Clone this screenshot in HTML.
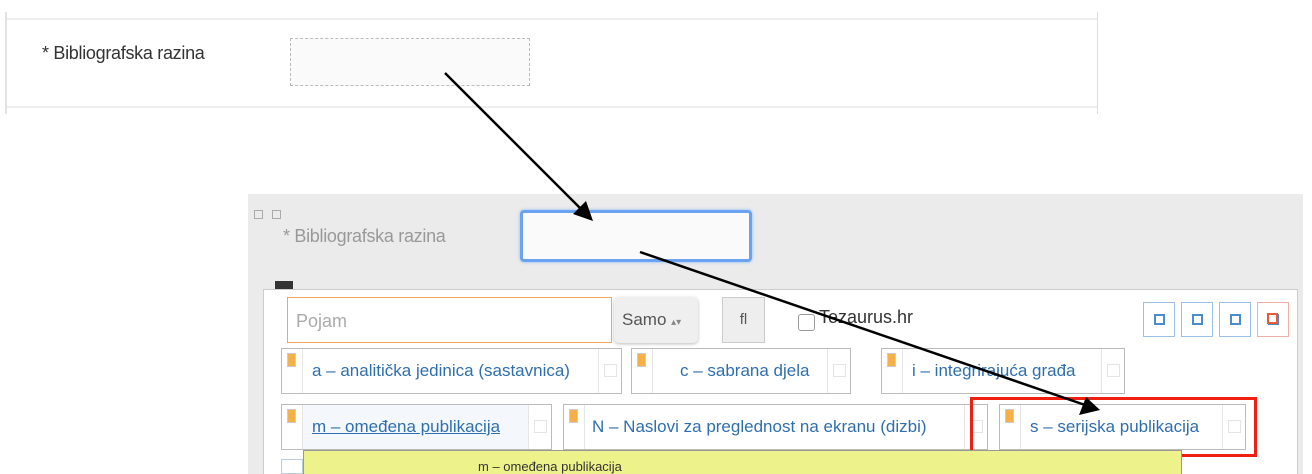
<!DOCTYPE html>
<html style="overflow:hidden;width:1312px;height:474px"><head><meta charset="utf-8"><style>
body{margin:0;width:1312px;height:474px;overflow:hidden;background:#fff;font-family:"Liberation Sans",sans-serif;position:relative}
.a{position:absolute;box-sizing:border-box}
.item{position:absolute;box-sizing:border-box;border:1px solid #bbb;background:#fff;height:46px}
.item .l{position:absolute;left:0;top:0;bottom:0;width:20px;border-right:1px solid #e6e6e6}
.item .l:before{content:"";position:absolute;left:5px;top:4px;width:9px;height:14px;background:#f5b04a;border:1px solid #ccc;box-sizing:border-box}
.item .r{position:absolute;right:0;top:0;bottom:0;width:22px;border-left:1px solid #e6e6e6}
.item .r:before{content:"";position:absolute;left:5px;top:15px;width:11px;height:11px;border:1px solid #e4e4e4}
.item .t{position:absolute;top:12px;color:#2f6fae;font-size:17px;white-space:nowrap}
.btn{position:absolute;top:302px;width:32px;height:35px;border:1px solid #9cc1e6;box-sizing:border-box}
.btn:after{content:"";position:absolute;left:10px;top:11px;width:11px;height:11px;border:2px solid #4a8ccc;box-sizing:border-box}
</style></head><body>
<div class="a" style="left:5px;top:12px;width:2px;height:102px;background:#e3e3e3"></div>
<div class="a" style="left:7px;top:18px;width:1091px;height:2px;background:#eee"></div>
<div class="a" style="left:7px;top:106px;width:1091px;height:2px;background:#eee"></div>
<div class="a" style="left:1097px;top:12px;width:1px;height:102px;background:#ddd"></div>
<div class="a" style="left:42px;top:43px;font-size:18px;color:#333;letter-spacing:-0.3px">* Bibliografska razina</div>
<div class="a" style="left:290px;top:38px;width:240px;height:48px;border:1px dashed #bbb;background:#fafafa"></div>

<div class="a" style="left:248px;top:194px;width:1055px;height:280px;background:#ebebeb"></div>
<div class="a" style="left:254px;top:210px;width:9px;height:9px;border:1px solid #aaa"></div>
<div class="a" style="left:272px;top:210px;width:9px;height:9px;border:1px solid #aaa"></div>
<div class="a" style="left:283px;top:226px;font-size:18px;color:#999;letter-spacing:-0.3px">* Bibliografska razina</div>
<div class="a" style="left:520px;top:210px;width:232px;height:52px;border:3px solid #6aa3f0;border-radius:4px;background:#fafafa;box-shadow:0 0 3px #8ab8f5"></div>
<div class="a" style="left:275px;top:281px;width:18px;height:10px;background:#333"></div>
<div class="a" style="left:263px;top:289px;width:1035px;height:185px;background:#fff;border:1px solid #ccc;border-bottom:none"></div>

<div class="a" style="left:287px;top:297px;width:325px;height:46px;border:1px solid #f2a65a;font-size:18px;color:#aaa;padding:13px 0 0 8px">Pojam</div>
<div class="a" style="left:614px;top:297px;width:84px;height:46px;background:#efefef;border-radius:5px;box-shadow:0 1px 3px #bbb;font-size:17px;color:#555;padding:13px 0 0 8px">Samo <span style="font-size:10px;color:#888">▴▾</span></div>
<div class="a" style="left:722px;top:297px;width:43px;height:46px;background:#eee;border:1px solid #ccc;font-size:15px;color:#555;text-align:center;padding-top:13px">fl</div>
<div class="a" style="left:798px;top:314px;width:17px;height:17px;border:1px solid #999;border-radius:3px;background:#fff"></div>
<div class="a" style="left:819px;top:307px;font-size:18px;color:#333">Tezaurus.hr</div>
<div class="btn" style="left:1143px"></div><div class="btn" style="left:1181px"></div><div class="btn" style="left:1219px"></div>
<div class="btn" style="left:1257px;border-color:#f0b0a8"></div>
<div class="a" style="left:1267px;top:313px;width:11px;height:11px;border:2px solid #e65a3a;background:#fff"></div>

<div class="item" style="left:281px;top:348px;width:341px"><div class="l"></div><div class="t" style="left:30px">a – analitička jedinica (sastavnica)</div><div class="r"></div></div>
<div class="item" style="left:631px;top:348px;width:220px"><div class="l"></div><div class="t" style="left:48px">c – sabrana djela</div><div class="r"></div></div>
<div class="item" style="left:881px;top:348px;width:244px"><div class="l"></div><div class="t" style="left:30px">i – integrirajuća građa</div><div class="r"></div></div>
<div class="item" style="left:281px;top:404px;width:271px;background:#f4f8fc"><div class="l" style="background:#fff"></div><div class="t" style="left:30px;text-decoration:underline">m – omeđena publikacija</div><div class="r" style="background:#fff"></div></div>
<div class="item" style="left:563px;top:404px;width:425px"><div class="l"></div><div class="t" style="left:28px">N – Naslovi za preglednost na ekranu (dizbi)</div><div class="r"></div></div>
<div class="item" style="left:999px;top:404px;width:247px"><div class="l"></div><div class="t" style="left:30px">s – serijska publikacija</div><div class="r"></div></div>
<div class="a" style="left:970px;top:397px;width:287px;height:60px;border:3px solid #f02010"></div>
<div class="a" style="left:281px;top:459px;width:22px;height:15px;border:1px solid #bcd"></div>
<div class="a" style="left:303px;top:450px;width:879px;height:24px;background:#eef28a;border:1px solid #999;border-bottom:none"></div>
<div class="a" style="left:478px;top:459px;font-size:13px;color:#333">m – omeđena publikacija</div>

<svg class="a" style="left:0;top:0" width="1312" height="474">
<line x1="445" y1="73" x2="584" y2="212" stroke="#000" stroke-width="2.5"/>
<polygon points="593,221 573,214 586,201" fill="#000"/>
<line x1="640" y1="252" x2="1088" y2="406" stroke="#000" stroke-width="2.5"/>
<polygon points="1100,410 1079,415 1086,397" fill="#000"/>
</svg>
</body></html>
